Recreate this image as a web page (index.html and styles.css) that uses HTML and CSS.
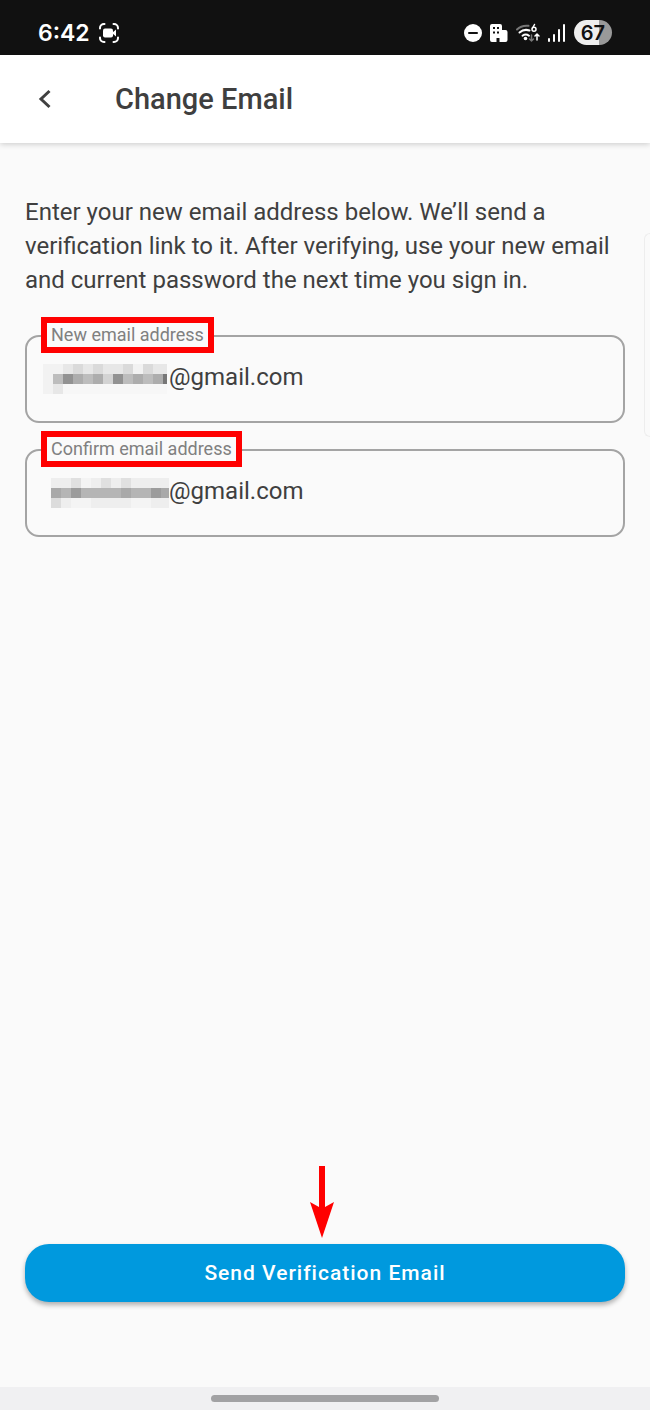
FILE: index.html
```
<!DOCTYPE html>
<html lang="en">
<head>
  <meta charset="UTF-8">
  <meta name="viewport" content="width=device-width, initial-scale=1.0">
  <title>Change Email</title>
  <link rel="stylesheet" href="styles.css">
</head>
<body>

  <div class="status-bar">
    <div class="status-left">
      <span class="clock">6:42</span>
      <svg width="22" height="22" viewBox="0 0 22 22" fill="none" stroke="#fff" stroke-width="2" stroke-linecap="round">
        <path d="M2 6.500V6a4 4 0 0 1 4-4h.5M15.500 2h.5a4 4 0 0 1 4 4v.5M20 15.500v.5a4 4 0 0 1-4 4h-.5M6.500 20H6a4 4 0 0 1-4-4v-.5"/>
        <rect x="5" y="6.500" width="10" height="9" rx="2" fill="#fff" stroke="none"/>
        <path d="M14 11l4-3.500v7z" fill="#fff" stroke="none"/>
      </svg>
    </div>
    <div class="status-right">
      <svg width="18" height="18" viewBox="0 0 18 18">
        <circle cx="9" cy="9" r="9" fill="#fff"/>
        <rect x="4" y="8" width="10" height="2" rx="1" fill="#111"/>
      </svg>
      <svg width="18" height="20" viewBox="0 0 18 20">
        <path d="M2 1h8a2 2 0 0 1 2 2v4h3.500A2 2 0 0 1 17.500 9v8a2 2 0 0 1-2 2H9.500v-4h-3v4H2a2 2 0 0 1-2-2V3a2 2 0 0 1 2-2z" fill="#fff"/>
        <path d="M3 4h2v2H3zM7 4h2v2H7zM3 8.500h2v2H3zM7 8.500h2v2H7z" fill="#111"/>
      </svg>
      <svg width="24" height="20" viewBox="0 0 24 20" fill="none" stroke-linecap="round">
        <path d="M1 6.500C4 3.500 8 2.300 12.500 2.800" stroke="#777" stroke-width="2"/>
        <path d="M3.500 9.500c3-2.600 6.500-3.200 10-2M6.500 12.700c2-1.500 4.500-1.500 6.500 0" stroke="#fff" stroke-width="2"/>
        <circle cx="9.500" cy="15.500" r="1.800" fill="#fff"/>
        <path d="M18.500 1.500l-2 3.500" stroke="#fff" stroke-width="1.500"/>
        <circle cx="18" cy="6.300" r="2" stroke="#fff" stroke-width="1.500"/>
        <path d="M15.500 12v6M13.500 16l2 2 2-2" stroke="#777" stroke-width="1.500"/>
        <path d="M21 17v-6M19 13l2-2 2 2" stroke="#fff" stroke-width="1.500"/>
      </svg>
      <svg width="18" height="20" viewBox="0 0 18 20" fill="#fff">
        <rect x="0" y="15" width="2" height="4" rx="1"/>
        <rect x="5" y="11" width="2" height="8" rx="1"/>
        <rect x="10" y="6" width="2" height="13" rx="1"/>
        <rect x="15" y="1" width="2" height="18" rx="1"/>
      </svg>
      <span class="battery">67</span>
    </div>
  </div>

  <header class="app-bar">
    <button type="button" class="back" aria-label="Back">
      <svg width="14" height="20" viewBox="0 0 14 20" fill="none" stroke="#404040" stroke-width="3">
        <path d="M11.500 2L3 10l8.500 8"/>
      </svg>
    </button>
    <h1>Change Email</h1>
  </header>

  <main>
    <form id="changeEmailForm">
      <p>Enter your new email address below. We’ll send a verification link to it. After verifying, use your new email and current password the next time you sign in.</p>

      <div class="field">
        <label for="newEmail">New email address</label>
        <svg width="126" height="30" viewBox="0 0 126 30" shape-rendering="crispEdges">
          <path fill="#f2f2f2" d="M0 0h20v10H10v20H0z"/>
          <path fill="#e7e7e7" d="M20 0h104v10H20zM10 20h10v10H10z"/>
          <path fill="#dadada" d="M30 0h10v10H30zM50 0h10v10H50zM80 0h10v10H80zM100 0h10v10h-10z"/>
          <path fill="#f2f2f2" d="M90 0h10v10H90z"/>
          <path fill="#f7f7f7" d="M20 20h104v10H20z"/>
          <path fill="#bdbdbd" d="M10 10h114v10H10z"/>
          <path fill="#929292" d="M20 10h10v10H20zM70 10h10v10H70z"/>
          <path fill="#adadad" d="M30 10h10v10H30zM50 10h10v10H50zM90 10h10v10H90zM110 10h10v10h-10z"/>
          <path fill="#d3d3d3" d="M60 10h10v10H60z"/>
          <path fill="#777" d="M120 10h4v10h-4z"/>
        </svg>
        <input type="text" id="newEmail" name="newEmail" value="@gmail.com">
      </div>

      <div class="field">
        <label for="confirmEmail">Confirm email address</label>
        <svg width="126" height="30" viewBox="0 0 126 30" shape-rendering="crispEdges">
          <path fill="#eeeeee" d="M8 0h118v30H8z"/>
          <path fill="#e0e0e0" d="M28 0h10v10H28zM58 0h10v10H58zM78 0h10v10H78z"/>
          <path fill="#f4f4f4" d="M38 0h10v10H38zM28 20h20v10H28zM88 20h20v10H88z"/>
          <path fill="#dcdcdc" d="M8 20h10v10H8z"/>
          <path fill="#b5b5b5" d="M8 10h118v10H8z"/>
          <path fill="#a9a9a9" d="M8 10h10v10H8zM78 10h10v10H78zM116 10h10v10h-10z"/>
          <path fill="#9c9c9c" d="M28 10h10v10H28zM108 10h10v10h-10z"/>
        </svg>
        <input type="text" id="confirmEmail" name="confirmEmail" value="@gmail.com">
      </div>
    </form>

    <div class="actions">
      <svg width="30" height="72" viewBox="0 0 30 72" fill="#f00">
        <path d="M9 0h6v41l9-5-12 36L0 36l9 5z"/>
      </svg>
      <button type="submit" form="changeEmailForm" class="send">Send Verification Email</button>
    </div>
  </main>

  <div class="edge-handle"></div>

  <div class="nav-bar">
    <div class="nav-pill"></div>
  </div>

</body>
</html>
```

FILE: styles.css
```
* {
  box-sizing: border-box;
}

body {
  display: flex;
  flex-direction: column;
  min-height: 100vh;
  margin: 0;
  font-family: Roboto, "Liberation Sans", sans-serif;
  color: #3f3f3f;
  background-color: #fafafa;
}

svg {
  display: block;
  flex: none;
}

.status-bar {
  display: flex;
  align-items: center;
  justify-content: space-between;
  height: 55px;
  padding: 10px 38px 0;
  color: #fff;
  background-color: #111;
  font-family: Inter, sans-serif;
}

.status-left {
  display: flex;
  align-items: center;
  gap: 8px;
}

.clock {
  font-size: 23px;
  font-weight: 600;
}

.status-right {
  display: flex;
  align-items: center;
  gap: 8px;
}

.battery {
  width: 38px;
  height: 25px;
  border-radius: 13px;
  background: linear-gradient(to right, #eee 67%, #999 67%);
  color: #111;
  font-size: 20px;
  font-weight: 600;
  line-height: 26px;
  text-align: center;
}

.app-bar {
  display: flex;
  align-items: center;
  gap: 50px;
  height: 88px;
  padding: 0 25px;
  background-color: #fff;
  box-shadow: 0 1px 6px rgba(0, 0, 0, 0.2);
}

.back {
  display: flex;
  align-items: center;
  justify-content: center;
  width: 40px;
  height: 40px;
  padding: 0;
  border: none;
  background: none;
  cursor: pointer;
}

h1 {
  margin: 0;
  font-size: 29px;
  font-weight: 500;
  line-height: 34px;
}

main {
  display: flex;
  flex: 1;
  flex-direction: column;
  justify-content: space-between;
  padding: 52px 25px 85px;
}

form {
  display: flex;
  flex-direction: column;
  gap: 26px;
}

p {
  margin: 0 0 12px;
  font-size: 24px;
  line-height: 34px;
}

.field {
  position: relative;
  display: flex;
  align-items: center;
  height: 88px;
  padding: 0 16px;
  border: 2px solid #a4a4a4;
  border-radius: 14px;
}

/* the label sits over the top border of its field */
.field label {
  position: absolute;
  top: -20px;
  left: 14px;
  padding: 0 4px;
  border: 6px solid #f00;
  background-color: #fafafa;
  color: #808080;
  font-size: 18px;
  line-height: 24px;
}

.field input {
  flex: 1;
  min-width: 0;
  padding: 0 0 4px;
  border: none;
  outline: none;
  background: none;
  color: #3f3f3f;
  font-family: inherit;
  font-size: 24px;
}

.actions {
  display: flex;
  flex-direction: column;
  align-items: center;
  gap: 6px;
}

.send {
  width: 100%;
  height: 58px;
  border: none;
  border-radius: 24px;
  background-color: #0099de;
  box-shadow: 0 3px 5px rgba(0, 0, 0, 0.3);
  color: #fff;
  font-family: inherit;
  font-size: 21px;
  font-weight: 500;
  letter-spacing: 1px;
  cursor: pointer;
}

.edge-handle {
  position: absolute;
  top: 233px;
  right: 0;
  width: 6px;
  height: 204px;
  border: 1px solid #ededed;
  border-right: none;
  border-radius: 6px 0 0 6px;
}

.nav-bar {
  display: flex;
  align-items: center;
  justify-content: center;
  height: 23px;
  background-color: #f0f0f2;
}

.nav-pill {
  width: 35%;
  height: 7px;
  border-radius: 4px;
  background-color: #a2a2a4;
}
```
